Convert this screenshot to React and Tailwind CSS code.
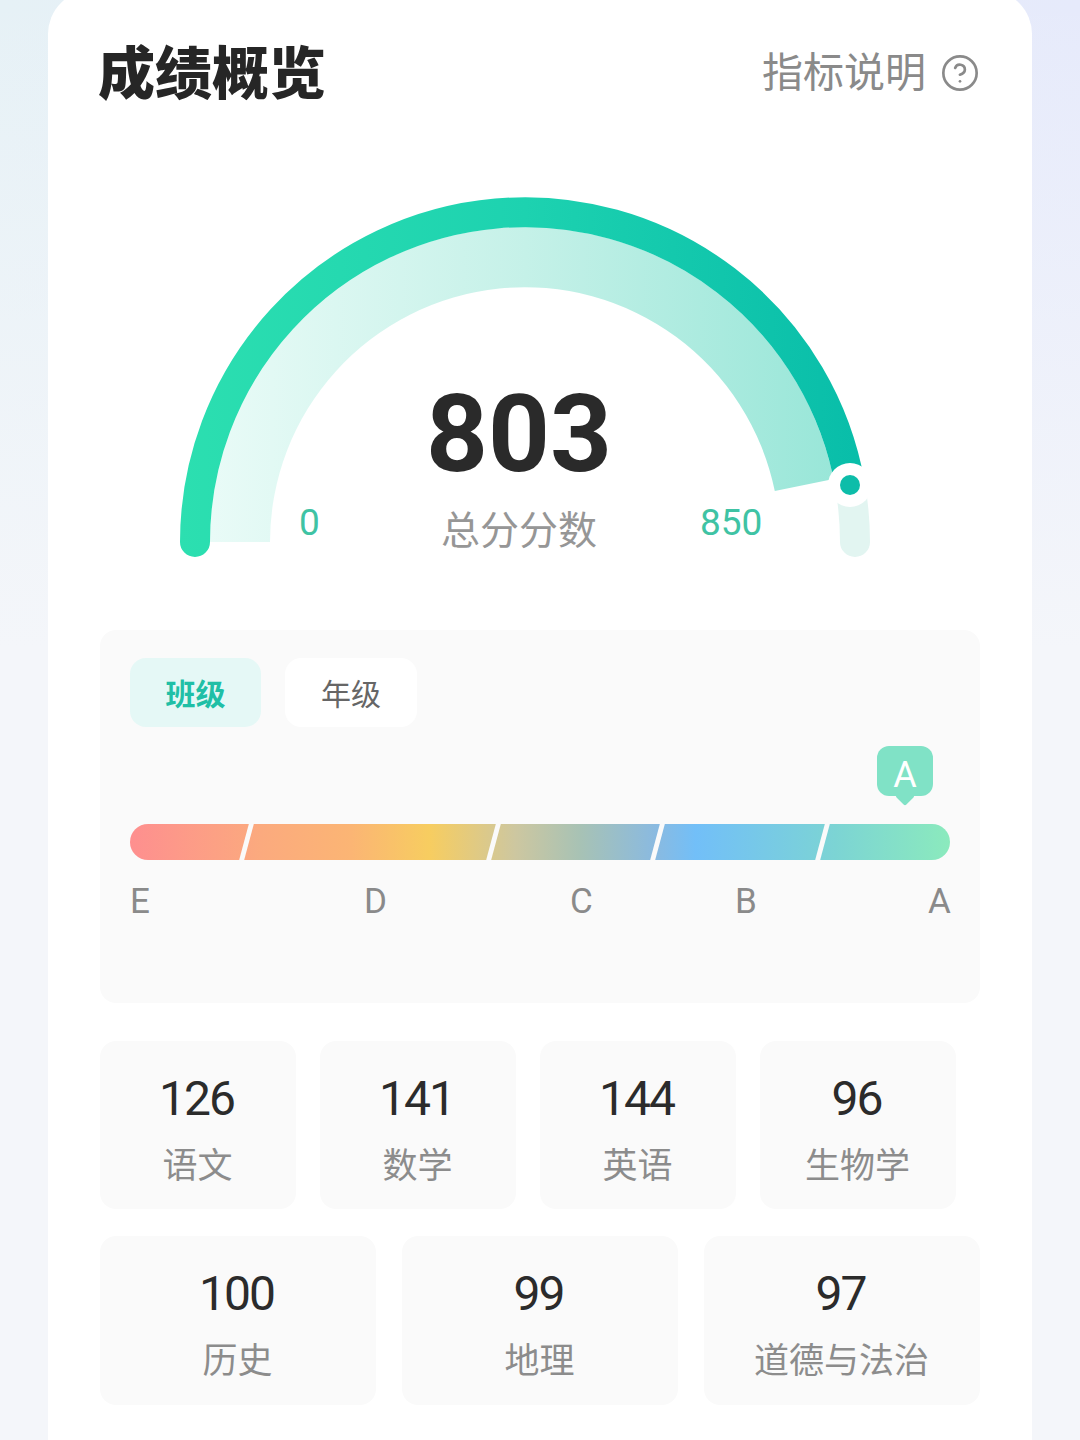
import React from "react";
import { CircleHelp } from "lucide-react";

const topScores = [
  { score: 126, name: "语文" },
  { score: 141, name: "数学" },
  { score: 144, name: "英语" },
  { score: 96, name: "生物学" },
];

const bottomScores = [
  { score: 100, name: "历史" },
  { score: 99, name: "地理" },
  { score: 97, name: "道德与法治" },
];

// label columns under the bar, widths are the distance to the next letter
const grades = [
  { label: "E", width: "w-[234px]" },
  { label: "D", width: "w-[206px]" },
  { label: "C", width: "w-[165px]" },
  { label: "B", width: "w-[193px]" },
  { label: "A", width: "w-[22px]" },
];

const dividers = ["left-[114px]", "left-[361px]", "left-[525px]", "left-[690px]"];

const ScoreCard = ({ score, name, width, height }) => (
  <div className={`${width} ${height} bg-[#fafafa] rounded-2xl flex flex-col items-center`}>
    <div className="mt-[29px] pr-[3px] text-[48px] leading-[58px] tracking-[-2px] text-[#2b2b2b]">{score}</div>
    <div className="mt-[15px] pr-[1px] text-[35px] leading-[48px] text-[#8c8c8c]">{name}</div>
  </div>
);

const Gauge = () => (
  <div className="relative w-[710px] h-[380px] ml-[70px] mt-[52px]">
    <svg width="710" height="380" viewBox="170 190 710 380" className="block">
      <defs>
        <linearGradient id="band" gradientUnits="userSpaceOnUse" x1="210" y1="0" x2="840" y2="0">
          <stop offset="0" stopColor="#e9fbf7" />
          <stop offset="0.5" stopColor="#c5f1e8" />
          <stop offset="1" stopColor="#98e6d8" />
        </linearGradient>
        <linearGradient id="arc" gradientUnits="userSpaceOnUse" x1="180" y1="0" x2="870" y2="0">
          <stop offset="0" stopColor="#2cdfb0" />
          <stop offset="0.5" stopColor="#1dd2b0" />
          <stop offset="1" stopColor="#08bda9" />
        </linearGradient>
      </defs>
      {/* inner band */}
      <path d="M210 542 A315 315 0 0 1 833.6 479 L774.8 491 A255 255 0 0 0 270 542 Z" fill="url(#band)" />
      {/* rest of the track */}
      <path d="M850 485 A330 330 0 0 1 855 542" fill="none" stroke="#e2f5f1" strokeWidth="30" strokeLinecap="round" />
      {/* progress */}
      <path d="M195 542 A330 330 0 0 1 850 485" fill="none" stroke="url(#arc)" strokeWidth="30" strokeLinecap="round" />
      <circle cx="850" cy="485" r="22" fill="#ffffff" />
      <circle cx="850" cy="485" r="10" fill="#0dbda9" />
    </svg>
    <div className="absolute left-[159px] top-[188px] w-[380px] flex flex-col items-center">
      <div className="text-[108px] leading-[112px] font-bold text-[#2a2a2a]">803</div>
      <div className="text-[39px] leading-[52px] mt-[15px] text-[#969696]">总分分数</div>
    </div>
    <div className="absolute left-[129px] top-[311px] text-[37px] leading-[44px] text-[#3fc3a4]">0</div>
    <div className="absolute left-[530px] top-[311px] text-[37px] leading-[44px] text-[#3fc3a4]">850</div>
  </div>
);

const App = () => {
  return (
    <div className="w-[1080px] h-[1440px] overflow-hidden px-[48px] font-['Roboto','Noto_Sans_CJK_SC',sans-serif] bg-[linear-gradient(180deg,transparent,#f4f6fa_45%),linear-gradient(90deg,#e6f1f6,#e6eafb)]">
      <div className="w-[984px] h-[1460px] -mt-[10px] bg-white rounded-t-[44px] px-[52px]">
        {/* Header */}
        <div className="flex justify-between items-center pt-[18px] h-[148px]">
          <h1 className="text-[57px] leading-[76px] font-black text-[#262626] mt-[4px] -ml-[2px]">成绩概览</h1>
          <div className="flex items-center gap-[14px] text-[#8a8a8a]">
            <span className="text-[41px] leading-[56px]">指标说明</span>
            <CircleHelp size={40} strokeWidth={1.6} />
          </div>
        </div>

        <Gauge />

        {/* Grade panel */}
        <div className="mt-[60px] h-[373px] bg-[#fafafa] rounded-2xl px-[30px] pt-[28px]">
          <div className="flex gap-[24px]">
            <div className="w-[131px] h-[69px] pt-[3px] rounded-2xl bg-[#e5f8f6] flex items-center justify-center text-[30px] font-bold text-[#20bfa6]">
              班级
            </div>
            <div className="w-[132px] h-[69px] pt-[3px] rounded-2xl bg-white flex items-center justify-center text-[30px] text-[#666666]">
              年级
            </div>
          </div>
          <div className="flex justify-end mt-[19px] pr-[17px]">
            <div className="relative w-[56px] h-[50px] pt-[8px] rounded-xl bg-[#80e2c6] flex items-center justify-center text-[36px] text-white">
              A
              <div className="absolute left-[21px] -bottom-[7px] w-[14px] h-[14px] rotate-45 rounded-[2px] bg-[#80e2c6]"></div>
            </div>
          </div>
          <div className="relative mt-[28px] h-[36px] rounded-full overflow-hidden bg-[linear-gradient(90deg,#fe8f8f_0%,#fbaa7e_16%,#fbb574_27%,#f7cd60_36.5%,#cdc7a0_47%,#a7c2b5_55%,#8abae0_64%,#72bff8_69%,#7cd4d4_86%,#8beabd_100%)]">
            {dividers.map((left) => (
              <div key={left} className={`absolute top-[-2px] h-[40px] w-[5px] bg-[#fafafa] skew-x-[-15deg] ${left}`}></div>
            ))}
          </div>
          <div className="flex mt-[18px] text-[35px] leading-[48px] text-[#8a8a8a]">
            {grades.map((g) => (
              <div key={g.label} className={g.width}>
                {g.label}
              </div>
            ))}
          </div>
        </div>

        {/* Subject scores */}
        <div className="flex gap-[24px] mt-[38px]">
          {topScores.map((s) => (
            <ScoreCard key={s.name} {...s} width="w-[196px]" height="h-[168px]" />
          ))}
        </div>
        <div className="flex justify-between mt-[27px]">
          {bottomScores.map((s) => (
            <ScoreCard key={s.name} {...s} width="w-[276px]" height="h-[169px]" />
          ))}
        </div>
      </div>
    </div>
  );
};

export default App;
